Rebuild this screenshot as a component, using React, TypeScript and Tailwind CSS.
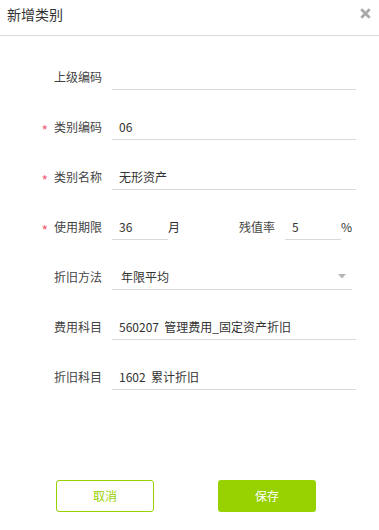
const font = { fontFamily: '"Noto Sans CJK SC", "Open Sans", sans-serif' };

function Label({ text, required }: { text: string; required?: boolean }) {
  return (
    <div className="w-[102px] shrink-0 flex items-center justify-end text-[12px] text-[#444] leading-[26px]">
      {required && <span className="text-[#f2607a] mr-[6px] text-[14px] leading-[14px] translate-y-[3px]">*</span>}
      {text}
    </div>
  );
}

function Field({ value, width = 'w-[244px]' }: { value?: string; width?: string }) {
  return (
    <div className={`${width} h-[26px] ml-[10px] border-b border-[#d9d9d9] pl-[7px] text-[12px] leading-[26px] text-[#333] whitespace-pre`}>
      {value}
    </div>
  );
}

export default function App() {
  return (
    <div className="w-[379px] h-[530px] bg-white flex flex-col" style={font}>
      <div className="h-[36px] shrink-0 flex justify-between border-b border-[#d9d9d9]">
        <span className="pl-[7px] pt-[4px] text-[14px] leading-[20px] text-[#333]">新增类别</span>
        <svg className="mt-[8px] mr-[8px]" width="11" height="11" viewBox="0 0 11 11">
          <path d="M1.3 1.3 L9.7 9.7 M9.7 1.3 L1.3 9.7" stroke="#a9a9a9" strokeWidth="2.8" />
        </svg>
      </div>

      <div className="pt-[16px] flex flex-col">
        <div className="h-[50px] flex items-center">
          <Label text="上级编码" />
          <Field />
        </div>
        <div className="h-[50px] flex items-center">
          <Label text="类别编码" required />
          <Field value="06" />
        </div>
        <div className="h-[50px] flex items-center">
          <Label text="类别名称" required />
          <Field value="无形资产" />
        </div>
        <div className="h-[50px] flex items-center">
          <Label text="使用期限" required />
          <Field value="36" width="w-[56px]" />
          <span className="w-[12px] text-[12px] text-[#333] leading-[26px] self-start mt-[12px]">月</span>
          <span className="w-[95px] text-right text-[12px] text-[#444] leading-[26px]">残值率</span>
          <Field value="5" width="w-[56px]" />
          <span className="text-[12px] text-[#333] leading-[26px] self-start mt-[12px]">%</span>
        </div>
        <div className="h-[50px] flex items-center">
          <Label text="折旧方法" />
          <div className="w-[240px] h-[26px] ml-[10px] border-b border-[#d9d9d9] pl-[9px] pr-[6px] flex items-center justify-between text-[12px] text-[#333]">
            <span>年限平均</span>
            <svg width="8" height="5" viewBox="0 0 8 5">
              <path d="M0 0 H8 L4 4.5 Z" fill="#b5b5b5" />
            </svg>
          </div>
        </div>
        <div className="h-[50px] flex items-center">
          <Label text="费用科目" />
          <Field value="560207  管理费用_固定资产折旧" />
        </div>
        <div className="h-[50px] flex items-center">
          <Label text="折旧科目" />
          <Field value="1602  累计折旧" />
        </div>
      </div>

      <div className="mt-[78px] pl-[56px] flex gap-[64px]">
        <button className="w-[98px] h-[32px] rounded-[3px] border border-[#97d100] text-[#97d100] text-[12px] bg-white">
          取消
        </button>
        <button className="w-[98px] h-[32px] rounded-[3px] bg-[#97d100] text-white text-[12px]">
          保存
        </button>
      </div>
    </div>
  );
}
